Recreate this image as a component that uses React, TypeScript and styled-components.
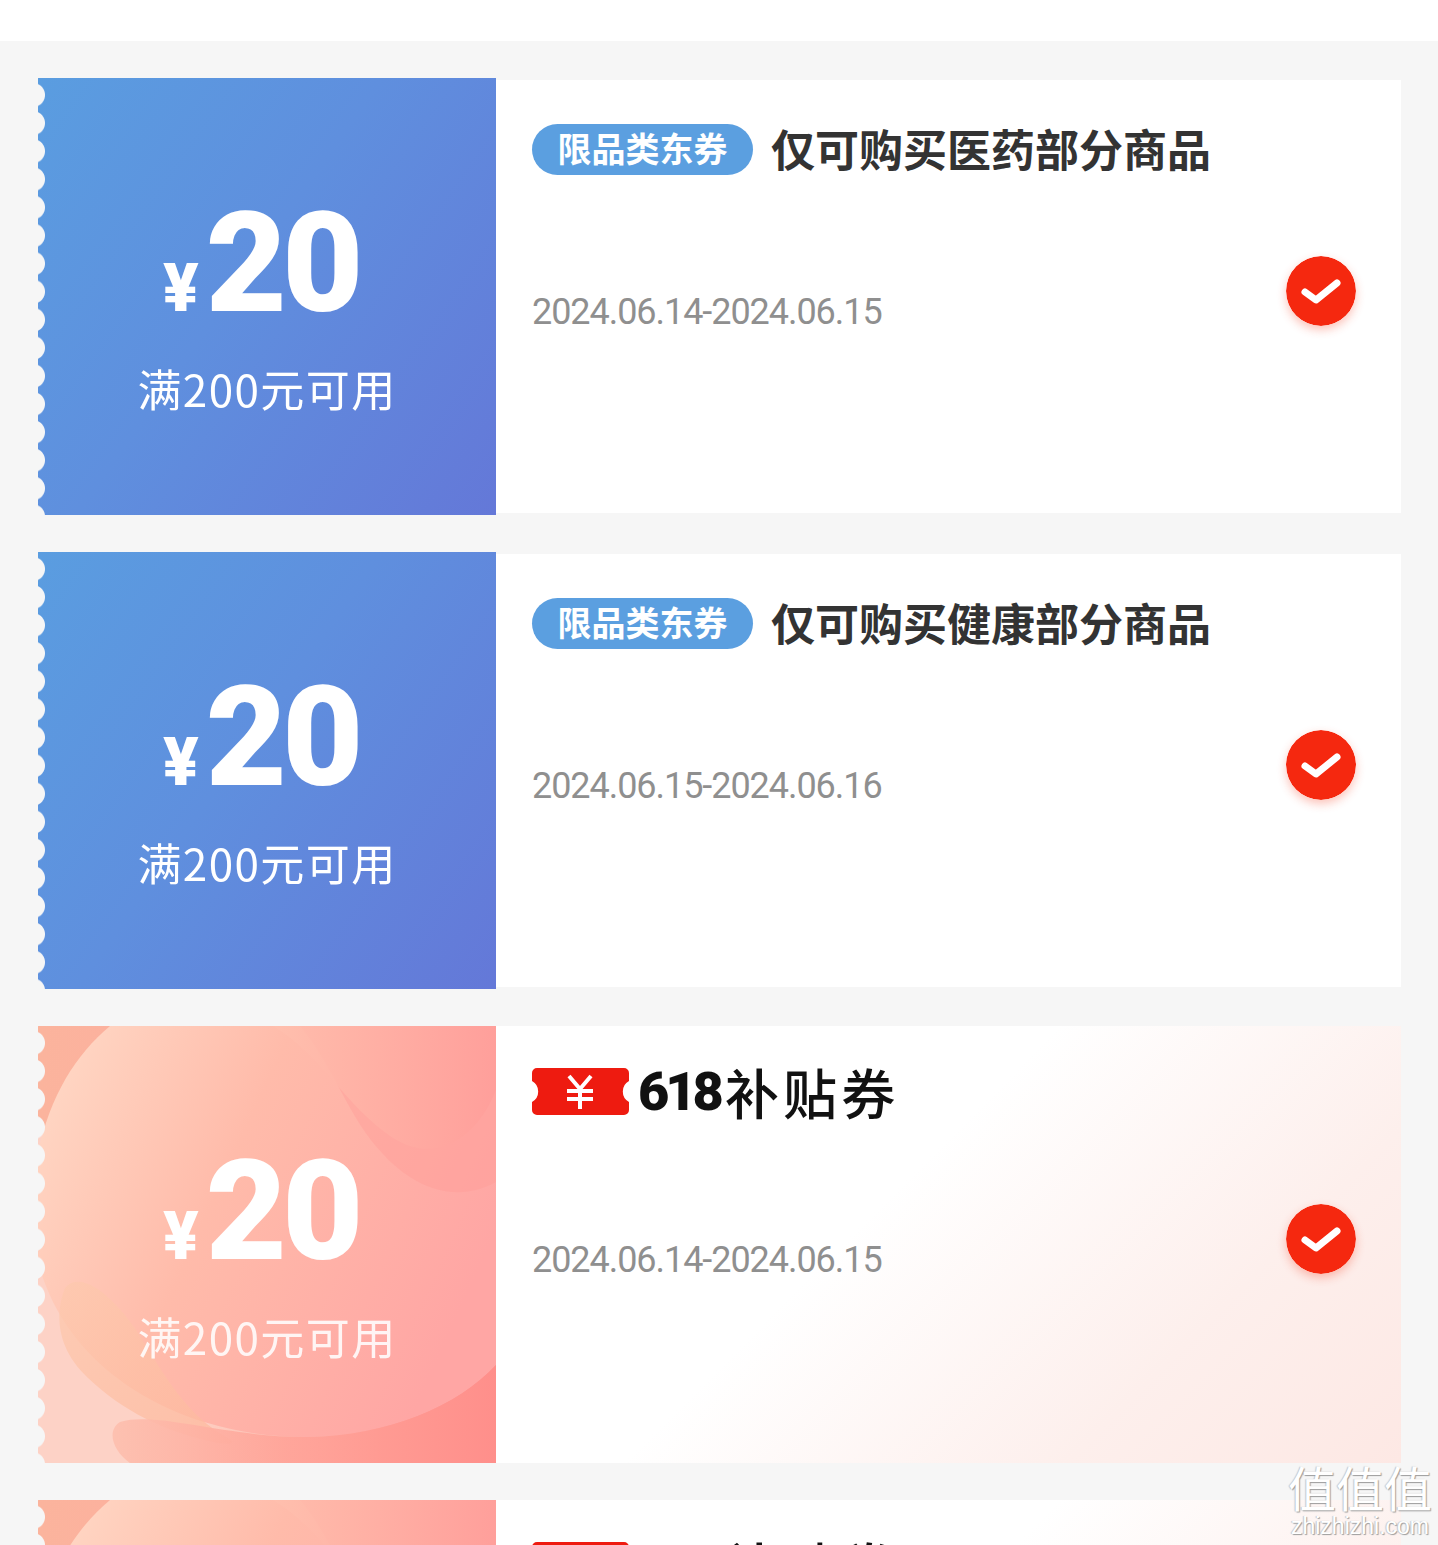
import React from "react";
import styled, { createGlobalStyle } from "styled-components";

const Global = createGlobalStyle`
  html, body { margin: 0; padding: 0; background: #f6f6f6; }
  #root { height: 1545px; overflow: hidden; }
`;

const Page = styled.div`
  position: relative;
  height: 1545px;
  overflow: hidden;
  background: #f6f6f6;
  font-family: "Noto Sans CJK SC", Roboto, sans-serif;
`;
const Header = styled.div`
  height: 41px;
  background: #fff;
  margin-bottom: 37px;
`;
const List = styled.div`
  display: flex;
  flex-direction: column;
  gap: 37px;
  padding: 0 37px 0 38px;
`;
const Card = styled.div`
  display: flex;
  height: 437px;
  flex-shrink: 0;
`;
const Stub = styled.div<{ $peach?: boolean }>`
  position: relative;
  width: 458px;
  flex-shrink: 0;
  overflow: hidden;
  display: flex;
  flex-direction: column;
  align-items: center;
  color: #fff;
  background: ${(p) => (p.$peach ? "#fdc4b0" : "linear-gradient(125deg, #5a9de0 0%, #5f8fde 45%, #6478d8 100%)")};
  -webkit-mask: radial-gradient(circle 12.5px at -5px 14px, transparent 92%, #000 100%) 0 3px / 100% 28.1px;
  mask: radial-gradient(circle 12.5px at -5px 14px, transparent 92%, #000 100%) 0 3px / 100% 28.1px;
`;
const Art = styled.svg`
  position: absolute;
  inset: 0;
  width: 100%;
  height: 100%;
`;
const Amount = styled.div`
  position: relative;
  display: flex;
  align-items: baseline;
  height: 100px;
  margin-top: 135px;
  margin-left: -12px;
  font-family: Roboto, sans-serif;
  font-weight: 900;
  line-height: 100px;
`;
const Yen = styled.span`
  font-size: 66px;
  margin-right: 7px;
`;
const Value = styled.span`
  font-size: 140px;
  letter-spacing: -4.5px;
`;
const Threshold = styled.div<{ $faded?: boolean }>`
  position: relative;
  margin-top: 45px;
  font-size: 44px;
  line-height: 60px;
  font-weight: 400;
  letter-spacing: 1.4px;
  opacity: ${(p) => (p.$faded ? 0.88 : 1)};
`;
const Panel = styled.div<{ $peach?: boolean }>`
  flex: 1;
  margin: ${(p) => (p.$peach ? "0" : "2px 0")};
  padding: 42px 45px 10px 36px;
  display: flex;
  align-items: center;
  background: ${(p) =>
    p.$peach ? "linear-gradient(135deg, #fff 42%, #fdefec 75%, #fde8e4 100%)" : "#fff"};
`;
const Body = styled.div`
  flex: 1;
  align-self: stretch;
  display: flex;
  flex-direction: column;
`;
const TitleRow = styled.div`
  display: flex;
  align-items: center;
  gap: 18px;
  height: 52px;
  margin-top: 1px;
`;
const Pill = styled.span`
  display: flex;
  align-items: center;
  justify-content: center;
  width: 221px;
  height: 51px;
  padding-bottom: 4px;
  box-sizing: border-box;
  border-radius: 26px;
  background: #5b9fe0;
  color: #fff;
  font-size: 34px;
  font-weight: 700;
`;
const Title = styled.span`
  font-size: 44px;
  line-height: 48px;
  margin-top: -3px;
  font-weight: 700;
  color: #333;
`;
const LogoRow = styled.div`
  display: flex;
  align-items: center;
  height: 47px;
  margin-bottom: 8px;
`;
const Ticket = styled.svg`
  width: 97px;
  height: 47px;
  flex-shrink: 0;
`;
const LogoNum = styled.span`
  margin-left: 9px;
  font-family: Roboto, sans-serif;
  font-weight: 900;
  font-size: 54px;
  letter-spacing: -4px;
  color: #111;
`;
const LogoText = styled.span`
  margin-left: 5px;
  font-size: 54px;
  letter-spacing: 4.2px;
  font-weight: 500;
  color: #111;
`;
const DateText = styled.div`
  margin-top: 115px;
  font-family: Roboto, sans-serif;
  font-size: 36px;
  line-height: 44px;
  font-weight: 400;
  letter-spacing: -1.05px;
  color: #8f8f8f;
`;
const Check = styled.svg`
  width: 70px;
  height: 70px;
  flex-shrink: 0;
  margin-bottom: 43px;
  border-radius: 50%;
  box-shadow: 0 4px 10px rgba(245, 60, 30, 0.3);
`;
const Watermark = styled.div`
  position: absolute;
  left: 1285px;
  top: 1458px;
  width: 150px;
  text-align: center;
  color: #fff;
  text-shadow: 1px 1px 1px #9c9c9c, -1px 0 1px #c4c4c4;
`;
const MarkCn = styled.div`
  font-size: 48px;
  line-height: 56px;
  font-weight: 400;
  white-space: nowrap;
`;
const MarkEn = styled.div`
  font-family: "Liberation Sans", sans-serif;
  font-size: 23px;
  line-height: 24px;
  white-space: nowrap;
`;

const PeachArt = ({ id }: { id: string }) => (
  <Art viewBox="0 0 458 437" preserveAspectRatio="none">
    <defs>
      <linearGradient id={`${id}a`} x1="0" x2="1" y1="0" y2="0">
        <stop offset="0" stopColor="#fbb49d" />
        <stop offset="0.6" stopColor="#ffa99f" />
        <stop offset="1" stopColor="#ff8f8b" />
      </linearGradient>
      <linearGradient id={`${id}b`} x1="0" x2="1" y1="0.1" y2="0.5">
        <stop offset="0" stopColor="#ffd9c6" />
        <stop offset="0.45" stopColor="#ffbbaa" />
        <stop offset="1" stopColor="#ffa6a4" />
      </linearGradient>
      <linearGradient id={`${id}c`} x1="0" x2="1" y1="0" y2="0">
        <stop offset="0" stopColor="#fdd2c6" />
        <stop offset="0.3" stopColor="#fdd2c6" />
        <stop offset="0.75" stopColor="#fdd2c6" stopOpacity="0" />
      </linearGradient>
      <linearGradient id={`${id}d`} x1="0" x2="1" y1="0" y2="0">
        <stop offset="0" stopColor="#fdbfae" />
        <stop offset="0.45" stopColor="#ffa398" />
        <stop offset="1" stopColor="#ff8f8b" />
      </linearGradient>
      <linearGradient id={`${id}e`} x1="0" x2="1" y1="0" y2="1">
        <stop offset="0" stopColor="#fdc9ae" />
        <stop offset="1" stopColor="#fdb89d" />
      </linearGradient>
      <linearGradient id={`${id}f`} x1="0" x2="1" y1="0" y2="0">
        <stop offset="0" stopColor="#ffc0ae" />
        <stop offset="1" stopColor="#ff9e9a" />
      </linearGradient>
    </defs>
    <rect width="458" height="437" fill={`url(#${id}a)`} />
    <rect y="100" width="458" height="337" fill={`url(#${id}c)`} />
    <path
      d="M72 0 C30 35 0 90 -6 170 C-14 320 120 412 270 411 C350 410 420 380 458 339 L458 0 Z"
      fill={`url(#${id}b)`}
    />
    <path
      d="M262 0 C296 40 310 92 345 128 C372 158 415 180 458 156 L458 0 Z"
      fill="#ff9c96"
      opacity="0.4"
    />
    <path
      d="M235 0 C285 30 305 78 355 112 C400 140 440 110 458 64 L458 0 Z"
      fill={`url(#${id}f)`}
      opacity="0.85"
    />
    <path
      d="M27 262 C18 285 16 320 50 352 C85 385 125 405 175 416 C190 419 200 418 190 412 C150 390 130 355 105 315 C85 280 45 240 27 262 Z"
      fill={`url(#${id}e)`}
      opacity="0.75"
    />
    <path
      d="M82 396 C68 405 75 425 92 437 L458 437 L458 339 C420 380 350 410 270 411 C190 412 120 385 82 396 Z"
      fill={`url(#${id}d)`}
      opacity="0.9"
    />
  </Art>
);

const CheckIcon = () => (
  <Check viewBox="0 0 70 70">
    <circle cx="35" cy="35" r="35" fill="#f5280f" />
    <path d="M19 36 L30 44 L51 27" fill="none" stroke="#fff" strokeWidth="7" strokeLinecap="round" strokeLinejoin="round" />
  </Check>
);

const TicketLogo = () => (
  <Ticket viewBox="0 0 97 47">
    <path
      d="M5 0 H92 a5 5 0 0 1 5 5 V13 a12 12 0 0 0 0 21 V42 a5 5 0 0 1 -5 5 H5 a5 5 0 0 1 -5 -5 V34 a12 12 0 0 0 0 -21 V5 a5 5 0 0 1 5 -5 Z"
      fill="#ee1b10"
    />
    <path
      d="M37 8 L48 21 L59 8 M35 23 H61 M35 31 H61 M48 21 V41"
      fill="none"
      stroke="#fff"
      strokeWidth="4"
    />
  </Ticket>
);

const coupons = [
  { tag: "限品类东券", title: "仅可购买医药部分商品", date: "2024.06.14-2024.06.15" },
  { tag: "限品类东券", title: "仅可购买健康部分商品", date: "2024.06.15-2024.06.16" },
  { peach: true, date: "2024.06.14-2024.06.15" },
  { peach: true, date: "2024.06.14-2024.06.15" },
];

export default function App() {
  return (
    <Page>
      <Global />
      <Header />
      <List>
        {coupons.map((c, i) => (
          <Card key={i}>
            <Stub $peach={c.peach}>
              {c.peach && <PeachArt id={`p${i}`} />}
              <Amount>
                <Yen>¥</Yen>
                <Value>20</Value>
              </Amount>
              <Threshold $faded={c.peach}>满200元可用</Threshold>
            </Stub>
            <Panel $peach={c.peach}>
              <Body>
                {c.peach ? (
                  <LogoRow>
                    <TicketLogo />
                    <LogoNum>618</LogoNum>
                    <LogoText>补贴券</LogoText>
                  </LogoRow>
                ) : (
                  <TitleRow>
                    <Pill>{c.tag}</Pill>
                    <Title>{c.title}</Title>
                  </TitleRow>
                )}
                <DateText>{c.date}</DateText>
              </Body>
              <CheckIcon />
            </Panel>
          </Card>
        ))}
      </List>
      <Watermark>
        <MarkCn>值值值</MarkCn>
        <MarkEn>zhizhizhi.com</MarkEn>
      </Watermark>
    </Page>
  );
}
